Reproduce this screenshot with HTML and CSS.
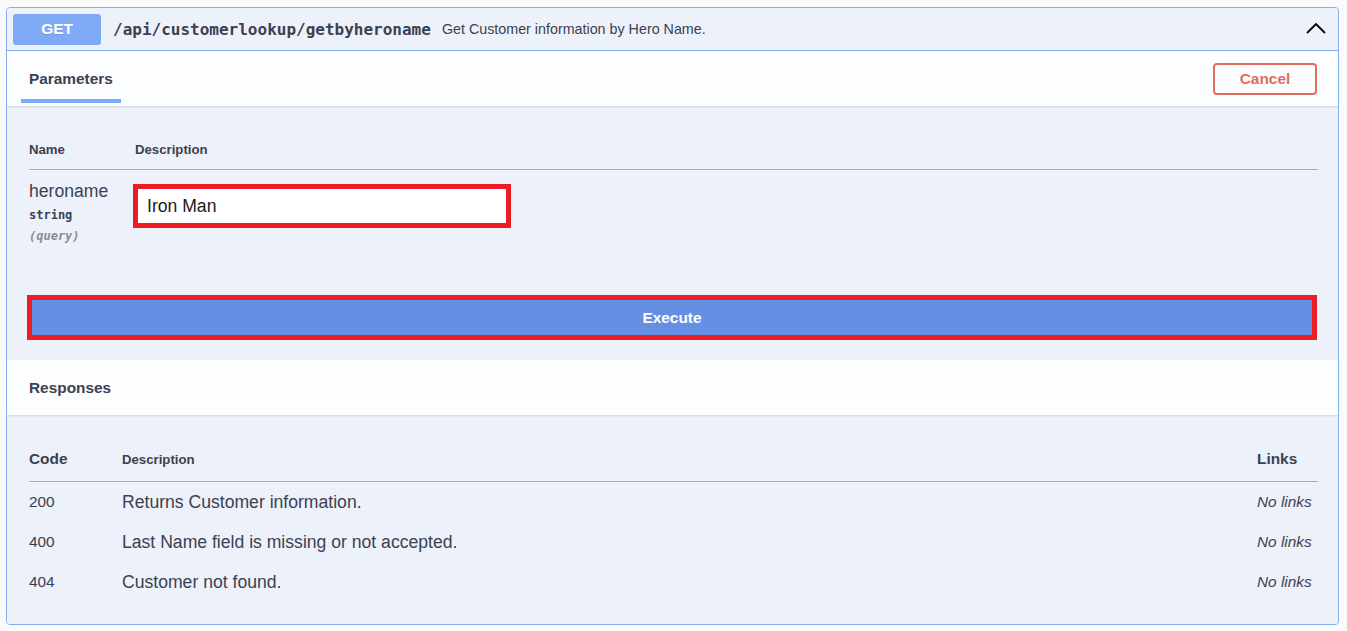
FILE: index.html
```html
<!DOCTYPE html>
<html lang="en">
<head>
<meta charset="utf-8">
<title>Swagger operation</title>
<link rel="stylesheet" href="styles.css">
</head>
<body>
<div class="opblock">
  <div class="summary">
    <span class="method">GET</span>
    <span class="path">/api/customerlookup/getbyheroname</span>
    <span class="summary-desc">Get Customer information by Hero Name.</span>
    <svg class="chevron" width="20" height="12" viewBox="0 0 20 12" aria-hidden="true"><polyline points="1,11 10,2 19,11" fill="none" stroke="#000" stroke-width="1.8"/></svg>
  </div>

  <div class="section-header">
    <h4 class="tab-title"><span class="tab-active">Parameters</span></h4>
    <button class="btn-cancel" type="button">Cancel</button>
  </div>

  <div class="params">
    <div class="ptable-head">
      <div class="col-name">Name</div>
      <div class="col-desc">Description</div>
    </div>
    <div class="prow">
      <div class="col-name">
        <div class="pname">heroname</div>
        <div class="ptype">string</div>
        <div class="pin">(query)</div>
      </div>
      <div class="col-desc">
        <input class="pinput" type="text" value="Iron Man">
      </div>
    </div>
    <div class="execute-wrap">
      <button class="btn-execute" type="button">Execute</button>
    </div>
  </div>

  <div class="section-header">
    <h4 class="tab-title">Responses</h4>
  </div>

  <div class="responses">
    <div class="rhead">
      <div class="rcode">Code</div>
      <div class="rdesc rdesc-head">Description</div>
      <div class="rlinks">Links</div>
    </div>
    <div class="rrow">
      <div class="rcode">200</div>
      <div class="rdesc">Returns Customer information.</div>
      <div class="rlinks nolinks">No links</div>
    </div>
    <div class="rrow">
      <div class="rcode">400</div>
      <div class="rdesc">Last Name field is missing or not accepted.</div>
      <div class="rlinks nolinks">No links</div>
    </div>
    <div class="rrow">
      <div class="rcode">404</div>
      <div class="rdesc">Customer not found.</div>
      <div class="rlinks nolinks">No links</div>
    </div>
  </div>
</div>
</body>
</html>
```

FILE: styles.css
```css
* { box-sizing: border-box; }

html, body {
  margin: 0;
  padding: 0;
  background: #fafafa;
}

body {
  font-family: "Liberation Sans", Arial, sans-serif;
  color: #3b4151;
}

.opblock {
  margin: 7px 0 0 6px;
  width: 1333px;
  border: 1px solid #86acf3;
  border-radius: 4px;
  background: #edf1fa;
  overflow: hidden;
}

/* ---------- summary ---------- */
.summary {
  height: 43px;
  display: flex;
  align-items: center;
  padding: 0 12px 0 6px;
  border-bottom: 1px solid #86acf3;
  background: #edf1fa;
}

.method {
  width: 88px;
  height: 31px;
  border-radius: 3px;
  background: #7faaf6;
  color: #fff;
  font-weight: 700;
  font-size: 15.4px;
  display: flex;
  align-items: center;
  justify-content: center;
  text-shadow: 0 1px 0 rgba(0, 0, 0, 0.1);
  flex: none;
}

.path {
  margin-left: 12px;
  font-family: "DejaVu Sans Mono", "Liberation Mono", monospace;
  font-weight: 700;
  font-size: 16px;
  color: #3b4151;
}

.summary-desc {
  margin-left: 11px;
  font-size: 14.3px;
  color: #3b4151;
  flex: 1;
}

.chevron {
  flex: none;
  margin-bottom: 3px;
}

/* ---------- section header ---------- */
.section-header {
  position: relative;
  z-index: 1;
  height: 55px;
  display: flex;
  align-items: center;
  justify-content: space-between;
  padding: 0 21px 0 22px;
  background: #fcfdff;
  box-shadow: 0 1px 2px rgba(0, 0, 0, 0.12);
}

.tab-title {
  margin: 0;
  font-size: 15.4px;
  font-weight: 700;
  color: #3b4151;
  line-height: 18px;
}

.tab-active {
  position: relative;
  display: inline-block;
}

.tab-active::after {
  content: "";
  position: absolute;
  left: -10%;
  width: 120%;
  top: 29px;
  height: 4px;
  background: #7faaf6;
}

.btn-cancel {
  width: 104px;
  height: 32px;
  border: 2px solid #e56b5d;
  border-radius: 4px;
  background: transparent;
  color: #e56b5d;
  font-family: "Liberation Sans", Arial, sans-serif;
  font-weight: 700;
  font-size: 15.4px;
  padding: 0;
}

/* ---------- parameters ---------- */
.params {
  padding: 23px 20px 20px 22px;
  background: #edf1fa;
}

.ptable-head {
  display: flex;
  align-items: center;
  height: 41px;
  border-bottom: 1px solid #a9adba;
  font-size: 13.2px;
  font-weight: 700;
}

.col-name {
  width: 106px;
  flex: none;
}

.col-desc {
  flex: 1;
}

.prow {
  display: flex;
  height: 125px;
  padding-top: 11px;
}

.pname {
  font-size: 17.6px;
  line-height: 20px;
  color: #3b4151;
}

.ptype {
  margin-top: 6px;
  font-family: "DejaVu Sans Mono", "Liberation Mono", monospace;
  font-size: 12px;
  font-weight: 700;
  line-height: 16px;
  color: #3b4151;
}

.pin {
  margin-top: 5px;
  font-family: "DejaVu Sans Mono", "Liberation Mono", monospace;
  font-size: 12px;
  font-style: italic;
  font-weight: 700;
  line-height: 16px;
  color: #8a8d96;
}

.pinput {
  display: block;
  margin: 3px 0 0 -2px;
  width: 378px;
  height: 44px;
  border: 5px solid #ee1d25;
  background: #fff;
  padding: 1px 9px 0;
  font-family: "Liberation Sans", Arial, sans-serif;
  font-size: 17.6px;
  color: #1b1b1b;
  outline: none;
}

.execute-wrap {
  margin-left: -2px;
}

.btn-execute {
  display: block;
  width: 1290px;
  height: 45px;
  border: 5px solid #ee1d25;
  background: #658fe3;
  color: #fff;
  font-family: "Liberation Sans", Arial, sans-serif;
  font-weight: 700;
  font-size: 15.4px;
  padding: 0;
}

/* ---------- responses ---------- */
.responses {
  padding: 22px 20px 22px 22px;
  background: #edf1fa;
}

.rhead {
  display: flex;
  align-items: center;
  height: 45px;
  border-bottom: 1px solid #a9adba;
  font-weight: 700;
  font-size: 15.4px;
}

.rrow {
  display: flex;
  align-items: center;
  height: 40px;
}

.rcode {
  width: 93px;
  flex: none;
  font-size: 15.4px;
}

.rhead .rcode,
.rhead .rlinks {
  font-weight: 700;
}

.rdesc {
  flex: 1;
  font-size: 17.6px;
}

.rdesc-head {
  font-size: 13.2px;
  font-weight: 700;
}

.rlinks {
  width: 61px;
  flex: none;
  font-size: 15.4px;
}

.nolinks {
  font-style: italic;
}
```
